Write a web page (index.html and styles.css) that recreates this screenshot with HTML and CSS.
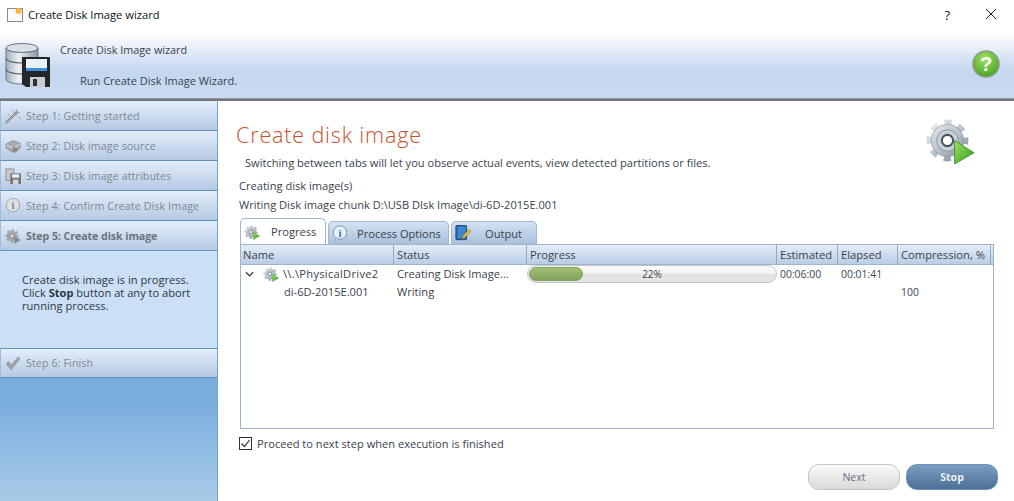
FILE: index.html
```html
<!DOCTYPE html>
<html lang="en">
<head>
<meta charset="utf-8">
<title>Create Disk Image wizard</title>
<link rel="stylesheet" href="styles.css">
</head>
<body>
<svg class="defs" width="0" height="0">
  <defs>
    <linearGradient id="gear" gradientUnits="userSpaceOnUse" x1="4" y1="4" x2="40" y2="44"><stop offset="0" stop-color="#eef1f4"/><stop offset="0.55" stop-color="#b4bdc7"/><stop offset="1" stop-color="#808a95"/></linearGradient>
    <linearGradient id="play" x1="0" y1="0" x2="1" y2="1"><stop offset="0" stop-color="#a5e05e"/><stop offset="1" stop-color="#2f9a1d"/></linearGradient>
    <radialGradient id="help" cx="0.45" cy="0.3" r="0.8"><stop offset="0" stop-color="#9fe05a"/><stop offset="1" stop-color="#3f9c25"/></radialGradient>
    <linearGradient id="drum" x1="0" y1="0" x2="1" y2="0"><stop offset="0" stop-color="#a3afba"/><stop offset="0.4" stop-color="#eef2f5"/><stop offset="1" stop-color="#8995a1"/></linearGradient>
    <symbol id="gearplay" viewBox="0 0 48 48">
      <circle cx="21" cy="24" r="17.500" fill="none" stroke="url(#gear)" stroke-width="6" stroke-dasharray="7 6.740" stroke-dashoffset="3.500"/>
      <circle cx="21" cy="24" r="16" fill="url(#gear)" stroke="#8b95a0" stroke-width="0.6"/>
      <circle cx="21" cy="24" r="10.500" fill="#c9d0d7" stroke="#7f8994" stroke-width="0.8"/>
      <circle cx="21" cy="24" r="5.500" fill="#fff" stroke="#4d5660" stroke-width="2"/>
      <path fill="url(#play)" stroke="#2e8a1d" stroke-width="0.8" d="M28 24l19 12-19 11z"/>
    </symbol>
  </defs>
</svg>

<div class="titlebar">
  <svg class="app-icon" viewBox="0 0 16 16"><rect x="0.5" y="1.5" width="15" height="13" fill="#fbfbfb" stroke="#8a8a8a"/><circle cx="11.5" cy="4" r="3" fill="#f5b83a"/></svg>
  <span class="title-text">Create Disk Image wizard</span>
  <span class="win-help">?</span>
  <svg class="win-close" viewBox="0 0 12 12"><path d="M1 1l10 10M11 1L1 11" stroke="#222" stroke-width="1" fill="none"/></svg>
</div>

<header class="banner">
  <svg class="disk-logo" viewBox="0 0 46 45">
    <ellipse cx="17" cy="5" rx="16" ry="4.500" fill="#d9e0e6" stroke="#6d7a86"/>
    <path d="M1 5v31c0 3 7 5 16 5s16-2 16-5V5c0 3-7 4.500-16 4.500S1 8 1 5z" fill="url(#drum)" stroke="#6d7a86"/>
    <path d="M1 15c0 3 7 5 16 5s16-2 16-5M1 26c0 3 7 5 16 5s16-2 16-5" fill="none" stroke="#59656f" stroke-width="1.2"/>
    <path d="M17 14h27a1 1 0 0 1 1 1v29H21l-4-3z" fill="#22272c"/>
    <rect x="21" y="16" width="21" height="12" fill="#e9f1f9"/>
    <rect x="21" y="25" width="21" height="3" fill="#3c8fd8"/>
    <rect x="25" y="34" width="15" height="10" fill="#c9cdd2"/>
    <rect x="28" y="36" width="4" height="7" fill="#2b3036"/>
  </svg>
  <div class="banner-title">Create Disk Image wizard</div>
  <div class="banner-sub">Run Create Disk Image Wizard.</div>
  <svg class="help-badge" viewBox="0 0 28 28">
    <circle cx="14" cy="14" r="13" fill="url(#help)" stroke="#8f9a8f" stroke-width="1.6"/>
    <text x="14" y="21" text-anchor="middle" class="help-q">?</text>
  </svg>
</header>

<div class="main">
  <aside class="sidebar">
    <div class="step">
      <svg class="step-icon" viewBox="0 0 18 18"><path d="M1 17L12 6" stroke="#777" stroke-width="2.4"/><path d="M1 17L12 6" stroke="#ddd" stroke-width="0.8"/><path d="M13 1l1 3 3 1-3 1-1 3-1-3-3-1 3-1z" fill="#9a9a9a"/><path d="M8 2l1 2M3 7l2 1M16 10l1 2" stroke="#9a9a9a"/></svg>
      <span>Step 1: Getting started</span>
    </div>
    <div class="step">
      <svg class="step-icon" viewBox="0 0 18 18"><path d="M1 7l8-4 8 3v5l-5 5-7-2-4-3z" fill="#a9adb2" stroke="#8b8f94"/><path d="M1 8l8 3 8-4" fill="none" stroke="#e2e4e6"/><path d="M9 9l6 4-6 4z" fill="#888"/></svg>
      <span>Step 2: Disk image source</span>
    </div>
    <div class="step">
      <svg class="step-icon" viewBox="0 0 18 18"><rect x="1" y="1" width="9" height="13" fill="#c3c7cb" stroke="#8d9195"/><path d="M6 6h12v12H6z" fill="#75797d"/><rect x="8" y="7" width="8" height="4" fill="#e9ebed"/><rect x="9" y="13" width="6" height="5" fill="#d5d7d9"/></svg>
      <span>Step 3: Disk image attributes</span>
    </div>
    <div class="step">
      <svg class="step-icon" viewBox="0 0 18 18"><circle cx="9" cy="8" r="7.500" fill="#dfe2e5" stroke="#999da1"/><path d="M5 14l-1 4 4-3z" fill="#dfe2e5" stroke="#999da1" stroke-width="0.6"/><text x="9" y="12" text-anchor="middle" class="info-i grey">i</text></svg>
      <span>Step 4: Confirm Create Disk Image</span>
    </div>
    <div class="step current">
      <svg class="step-icon" viewBox="0 0 48 48"><circle cx="21" cy="24" r="17.500" fill="none" stroke="#a3a7ab" stroke-width="6" stroke-dasharray="7 6.740" stroke-dashoffset="3.500"/><circle cx="21" cy="24" r="16" fill="#a3a7ab"/><circle cx="21" cy="24" r="6" fill="#e4e6e8" stroke="#6f7377" stroke-width="2"/><path fill="#85898d" d="M28 24l19 12-19 11z"/></svg>
      <span>Step 5: Create disk image</span>
    </div>
    <div class="step-note">Create disk image is in progress.<br>Click <b>Stop</b> button at any to abort<br>running process.</div>
    <div class="step last">
      <svg class="step-icon" viewBox="0 0 18 18"><path d="M1 10l3-3 3 4 8-9 2 2-10 13z" fill="#9da1a5" stroke="#8d9195" stroke-width="0.5"/></svg>
      <span>Step 6: Finish</span>
    </div>
  </aside>

  <main class="content">
    <div class="heading-row">
      <h1 class="heading">Create disk image</h1>
      <svg class="heading-icon"><use href="#gearplay"/></svg>
    </div>
    <p class="intro">Switching between tabs will let you observe actual events, view detected partitions or files.</p>
    <p class="status-line first">Creating disk image(s)</p>
    <p class="status-line second">Writing Disk image chunk D:\USB DIsk Image\di-6D-2015E.001</p>

    <div class="tabs">
      <div class="tab active">
        <svg class="tab-icon"><use href="#gearplay"/></svg>
        <span>Progress</span>
      </div>
      <div class="tab options">
        <svg class="tab-icon" viewBox="0 0 18 18"><circle cx="9" cy="8.500" r="7.500" fill="#e9f2fa" stroke="#6d8fb0"/><path d="M5 14l-1 4 4-3z" fill="#e9f2fa" stroke="#6d8fb0" stroke-width="0.6"/><text x="9" y="13" text-anchor="middle" class="info-i">i</text></svg>
        <span>Process Options</span>
      </div>
      <div class="tab output">
        <svg class="tab-icon" viewBox="0 0 18 18"><rect x="1" y="0.500" width="12" height="16" rx="1" fill="#2a68ae" stroke="#173f70"/><rect x="3" y="2" width="9" height="13" fill="#3f86cf"/><path d="M8 16l1-4 7-7 2 2-7 7z" fill="#f0c23c" stroke="#8c6a10" stroke-width="0.6"/></svg>
        <span>Output</span>
      </div>
    </div>

    <div class="grid-box">
      <div class="grid-head">
        <div class="col">Name</div>
        <div class="col">Status</div>
        <div class="col">Progress</div>
        <div class="col">Estimated</div>
        <div class="col">Elapsed</div>
        <div class="col">Compression, %</div>
      </div>
      <div class="grid-row">
        <div class="cell name-cell">
          <svg class="chevron" viewBox="0 0 10 6"><path d="M1 1l4 4 4-4" fill="none" stroke="#444" stroke-width="1.5"/></svg>
          <svg class="row-icon"><use href="#gearplay"/></svg>
          <span class="drive">\\.\PhysicalDrive2</span>
        </div>
        <div class="cell">Creating Disk Image...</div>
        <div class="cell bar-cell">
          <div class="bar"><div class="bar-fill" style="width:22%"></div><span class="bar-label">22%</span></div>
        </div>
        <div class="cell num">00:06:00</div>
        <div class="cell num">00:01:41</div>
        <div class="cell"></div>
      </div>
      <div class="grid-row">
        <div class="cell child-name">di-6D-2015E.001</div>
        <div class="cell">Writing</div>
        <div class="cell"></div>
        <div class="cell"></div>
        <div class="cell"></div>
        <div class="cell num">100</div>
      </div>
    </div>

    <label class="proceed">
      <svg class="check" viewBox="0 0 13 13"><rect x="0.5" y="0.5" width="12" height="12" fill="#fff" stroke="#333"/><path d="M2.5 6.5l3 3 5-6.5" fill="none" stroke="#333" stroke-width="1.2"/></svg>
      <span>Proceed to next step when execution is finished</span>
    </label>

    <div class="actions">
      <button class="btn next" type="button">Next</button>
      <button class="btn stop" type="button">Stop</button>
    </div>
  </main>
</div>
</body>
</html>
```
FILE: styles.css
```css
* { box-sizing: border-box; }
html, body { margin: 0; padding: 0; }
body {
  width: 1014px;
  height: 501px;
  overflow: hidden;
  background: #fff;
  font-family: "Open Sans", "Noto Sans", "Liberation Sans", sans-serif;
  font-size: 11px;
  color: #3f4650;
  display: flex;
  flex-direction: column;
}
.defs { position: absolute; }

.titlebar {
  height: 33px;
  flex: none;
  display: flex;
  align-items: center;
  padding: 0 17px 4px 7px;
  background: #fff;
  color: #111;
  font-size: 11.2px;
}
.app-icon { width: 16px; height: 16px; margin-right: 5px; }
.title-text { flex: 1; }
.win-help { font-size: 13px; margin-right: 35px; font-weight: 400; }
.win-close { width: 12px; height: 12px; margin-bottom: 2px; }

.banner {
  height: 68px;
  flex: none;
  display: grid;
  grid-template-columns: 60px 20px 1fr 42px;
  grid-template-rows: 34px 34px;
  background: linear-gradient(#ffffff 0%, #c4d7ef 55%, #c9dbf1 96%, #6e7177 96.5%, #77797d 100%);
}
.disk-logo { grid-row: 1 / 3; grid-column: 1; width: 46px; height: 45px; margin: 10px 0 0 5px; }
.banner-title { grid-column: 2 / 4; grid-row: 1; align-self: end; padding-bottom: 10px; font-size: 10.8px; color: #39424d; }
.banner-sub { grid-column: 3; grid-row: 2; margin-top: 6px; font-size: 11px; color: #39424d; }
.help-badge { grid-column: 4; grid-row: 1 / 3; width: 28px; height: 28px; margin: 17px 0 0 0; }
.help-q { font: 700 20px "Liberation Sans", sans-serif; fill: #fff; }

.main { flex: 1; display: flex; min-height: 0; }

.sidebar {
  width: 218px;
  flex: none;
  background: linear-gradient(#7aadde 0%, #7aadde 75%, #a9cbe8 100%);
  border-right: 1px solid #6ea3d2;
  display: flex;
  flex-direction: column;
}
.step {
  height: 30px;
  flex: none;
  display: flex;
  align-items: center;
  gap: 5px;
  padding: 1px 0 0 4px;
  background: linear-gradient(#e3edfb, #b6cae3);
  border-bottom: 1px solid #5f92bf;
  border-left: 1px solid #9fbddc;
  color: #808890;
  font-size: 10.7px;
  letter-spacing: 0.1px;
}
.step.current { font-weight: 700; letter-spacing: -0.1px; color: #6c747c; }
.step.last { border-top: 1px solid #5f92bf; padding-top: 0; }
.step-icon { width: 16px; height: 16px; flex: none; }
.step-note {
  height: 97px;
  flex: none;
  padding: 22px 0 0 22px;
  background: #cbdff7;
  font-size: 11.1px;
  line-height: 13px;
  color: #2f3740;
}
.info-i { font: 700 12px "Liberation Serif", serif; fill: #2e6ea6; }
.info-i.grey { fill: #7e8286; }

.content {
  flex: 1;
  min-width: 0;
  padding: 0 16px 0 21px;
  display: flex;
  flex-direction: column;
}
.heading-row { height: 51px; flex: none; display: flex; justify-content: space-between; padding-top: 13px; }
.heading { margin: 7px 0 0 -3px; font-size: 21.5px; font-weight: 300; color: #c9502e; line-height: 28px; letter-spacing: 0.85px; }
.heading-icon { width: 49px; height: 49px; margin: 2px 23px 0 0; }
.intro { margin: 3px 0 0 6px; height: 16px; line-height: 16px; font-size: 11.1px; color: #3a424b; }
.status-line { margin: 0; line-height: 20px; height: 20px; font-size: 11.1px; color: #3a424b; }
.status-line.first { margin-top: 5px; }
.status-line.second { margin-top: -1px; }

.tabs { display: flex; height: 26px; flex: none; gap: 2px; margin: 3px 0 0 1px; align-items: flex-end; }
.tab {
  height: 23px;
  display: flex;
  align-items: center;
  border: 1px solid #a0b5cf;
  border-bottom: 0;
  border-radius: 5px 5px 0 0;
  background: linear-gradient(#d4e2f3, #a9c0dc);
  color: #3a424b;
  font-size: 11.1px;
  padding-left: 3px;
}
.tab.active { height: 26px; width: 86px; background: #fff; }
.tab.active span { margin-left: 11px; }
.tab.options { width: 121px; }
.tab.options span { margin-left: 9px; }
.tab.output { width: 86px; }
.tab.output span { margin-left: 14px; }
.tab-icon { width: 16px; height: 16px; flex: none; }

.grid-box {
  margin-left: 1px;
  width: 754px;
  height: 185px;
  flex: none;
  border: 1px solid #9fb3ca;
  background: #fff;
}
.grid-head, .grid-row {
  display: grid;
  grid-template-columns: 153px 133px 250px 61px 60px 93px;
}
.grid-head {
  height: 20px;
  background: linear-gradient(#e4ecf8, #b9cde6);
  border-bottom: 1px solid #9fb3ca;
}
.col { padding: 0 0 0 3px; line-height: 19px; border-right: 1px solid #8fa9c9; font-size: 11.2px; color: #3a424b; white-space: nowrap; }
.col:first-child { padding-left: 2px; }
.grid-row { height: 18px; }
.cell { padding-left: 3px; line-height: 18px; font-size: 11.1px; color: #3a424b; white-space: nowrap; }
.cell.num { font-size: 10.4px; }
.name-cell { display: flex; align-items: center; padding-left: 4px; }
.chevron { width: 9px; height: 6px; margin-right: 9px; }
.row-icon { width: 16px; height: 16px; margin-right: 4px; }
.drive { letter-spacing: 0.3px; }
.child-name { padding-left: 43px; }
.bar-cell { padding: 0; }
.bar {
  position: relative;
  width: 250px;
  height: 18px;
  padding: 1px;
  border: 1px solid #bcc6d0;
  border-radius: 9px;
  background: linear-gradient(#fafafa 0%, #f4f4f4 45%, #e2e2e2 50%, #e6e6e6 100%);
}
.bar-fill { height: 14px; border-radius: 7px; background: linear-gradient(#a3bf76, #7fa157); border: 1px solid #83a05f; }
.bar-label { position: absolute; top: 0; left: 0; right: 0; text-align: center; line-height: 16px; font-size: 10px; }

.proceed { display: flex; align-items: center; gap: 5px; margin: 7px 0 0 0; height: 14px; font-size: 11.1px; color: #3a424b; }
.check { width: 13px; height: 13px; flex: none; }

.actions { display: flex; justify-content: flex-end; gap: 6px; margin-top: 14px; height: 26px; }
.btn { width: 92px; height: 26px; border-radius: 11px; font-family: inherit; font-size: 10.6px; padding: 0; }
.btn.next { background: linear-gradient(#fafafa, #d9d9d9); border: 1px solid #c5c5c5; color: #68707a; }
.btn.stop { background: linear-gradient(#7c9dc0, #4c6f97); border: 1px solid #6a92bb; color: #e8eef5; font-weight: 700; }
```
